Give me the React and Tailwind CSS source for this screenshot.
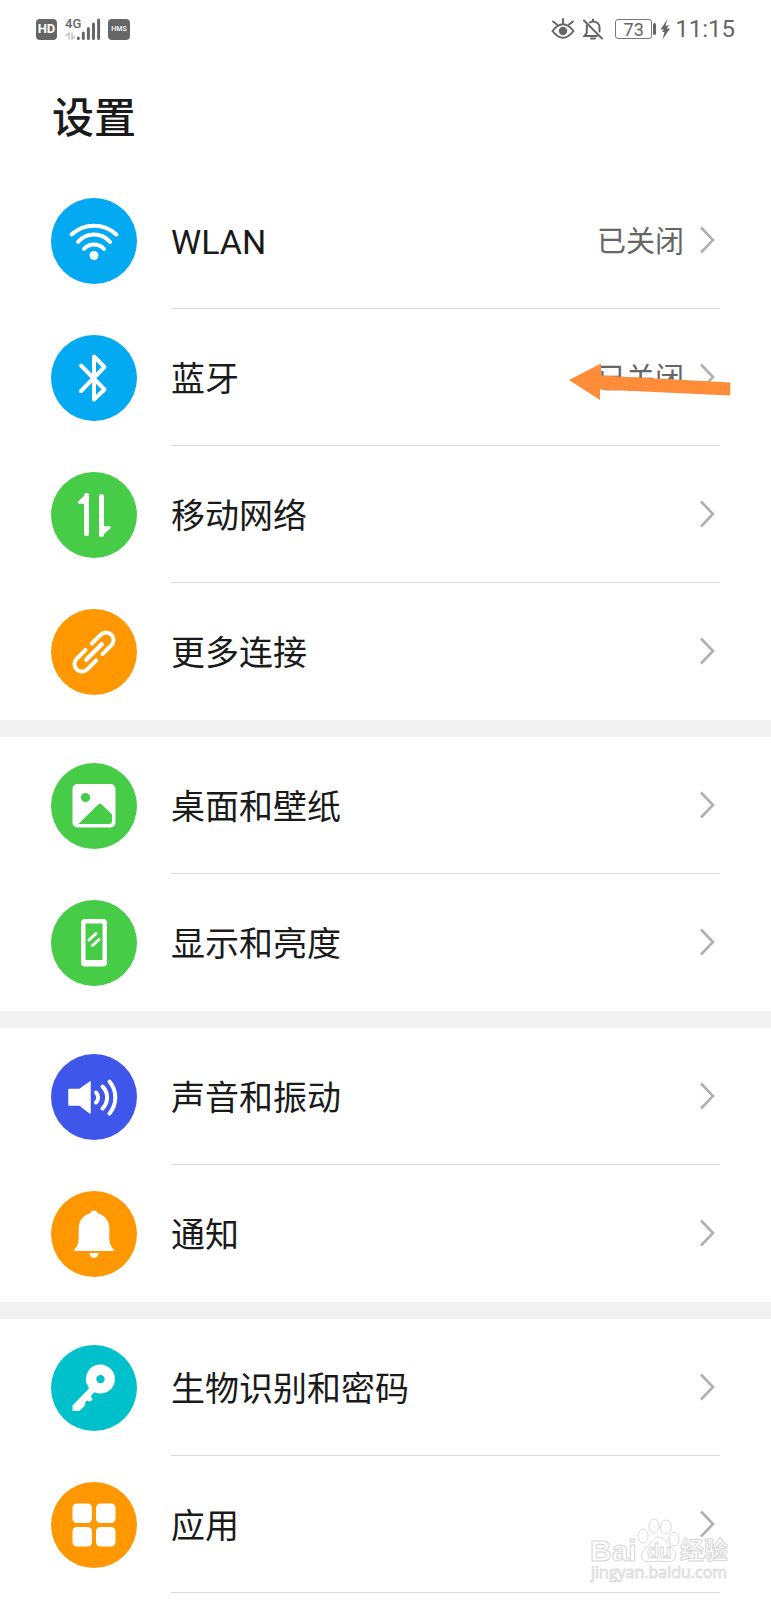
import React from 'react';

// Row icons, all drawn on the same 86x86 grid as the round badge
const WifiIcon = () => (
  <svg viewBox="0 0 86 86" className="w-full" fill="none" stroke="#fff" strokeWidth="4" strokeLinecap="round">
    <path d="M20.500 36.500A33 33 0 0 1 65.500 36.500" />
    <path d="M27 44A21 21 0 0 1 59 44" />
    <path d="M33 51A13.500 13.500 0 0 1 53 51" />
    <circle cx="43" cy="57.500" r="4.500" fill="#fff" stroke="none" />
  </svg>
);

const BluetoothIcon = () => (
  <svg viewBox="0 0 86 86" className="w-full" fill="none" stroke="#fff" strokeWidth="4" strokeLinecap="round" strokeLinejoin="round">
    <path d="M30 30.500 53.500 54.500 43 64.500V21.500L53.500 32 30 56" />
  </svg>
);

const MobileDataIcon = () => (
  <svg viewBox="0 0 86 86" className="w-full" fill="#fff" stroke="#fff" strokeLinecap="round" strokeLinejoin="round">
    <path d="M35.500 23.500V61.500M50.500 24.500V62.500" strokeWidth="5" />
    <path d="M36.500 22.500 28 30.500H36.500ZM49.500 63.500 58.500 55.500H49.500Z" strokeWidth="2.500" />
  </svg>
);

const LinkIcon = () => (
  <svg viewBox="0 0 86 86" className="w-full" fill="none" stroke="#fff" strokeWidth="4" strokeLinecap="round">
    <g transform="rotate(-45 43 43)">
      <path d="M47.500 35.500H60A7.500 7.500 0 0 1 67.500 43A7.500 7.500 0 0 1 60 50.500H47.500" />
      <path d="M38.500 50.500H26A7.500 7.500 0 0 1 18.500 43A7.500 7.500 0 0 1 26 35.500H38.500" />
      <path d="M32 43H54" strokeWidth="4.500" />
    </g>
  </svg>
);

const WallpaperIcon = () => (
  <svg viewBox="0 0 86 86" className="w-full" fill="#fff">
    <rect x="21.500" y="21" width="43" height="43.500" rx="5" />
    <g fill="#47cc47">
      <circle cx="34.500" cy="34.500" r="4.600" />
      <path d="M27.500 61 47.500 41.300Q49 40 50.500 41.300L61 51.500V58Q61 61 58 61Z" />
    </g>
  </svg>
);

const DisplayIcon = () => (
  <svg viewBox="0 0 86 86" className="w-full" fill="#fff">
    <path fillRule="evenodd" d="M34 19H52a4 4 0 0 1 4 4V62.500a4 4 0 0 1-4 4H34a4 4 0 0 1-4-4V23a4 4 0 0 1 4-4ZM34.500 23.500V60H51.500V23.500Z" />
    <path d="M38 40 45 33.500M41.500 45.500 48 39.500" stroke="#fff" strokeWidth="3" strokeLinecap="round" />
  </svg>
);

const SoundIcon = () => (
  <svg viewBox="0 0 86 86" className="w-full" fill="none" stroke="#fff" strokeWidth="4" strokeLinecap="round">
    <path d="M18 35.500H28.500L39 28V59L28.500 51H18Z" fill="#fff" strokeWidth="1.500" strokeLinejoin="round" />
    <path d="M45 38.500A7 7 0 0 1 45 48.500" />
    <path d="M51.500 32.500A15.500 15.500 0 0 1 51.500 54.500" />
    <path d="M58.500 27.500A25 25 0 0 1 58.500 59.500" />
  </svg>
);

const BellIcon = () => (
  <svg viewBox="0 0 86 86" className="w-full" fill="#fff">
    <path d="M43 19.500C45 19.500 46 20.500 46.500 22.300 53.500 24 58.300 29.500 58.300 37V47C58.300 53 60.500 56 63 59Q63.500 60 62.500 60H23.500Q22.500 60 23 59C25.500 56 27.700 53 27.700 47V37C27.700 29.500 32.500 24 39.500 22.300 40 20.500 41 19.500 43 19.500Z" />
    <path d="M38.500 62H47.500C47.500 65 45.500 66.700 43 66.700S38.500 65 38.500 62Z" />
  </svg>
);

const KeyIcon = () => (
  <svg viewBox="0 0 86 86" className="w-full" fill="#fff">
    <path fillRule="evenodd" d="M49.500 19.500A14.500 14.500 0 1 1 43.500 47.200L40.500 50 40 52Q42.500 54 40.500 55.500 39 57.500 36.500 55.500L34 57.500Q35 60 33 61.500L28.500 65.800H21.500V60.500L38 43.500 37 41.500A14.500 14.500 0 0 1 49.500 19.500ZM49.500 29.900A4.200 4.200 0 1 0 49.500 38.300 4.200 4.200 0 0 0 49.500 29.900Z" />
  </svg>
);

const AppsIcon = () => (
  <svg viewBox="0 0 86 86" className="w-full" fill="#fff">
    <rect x="21.500" y="21.500" width="19.500" height="19.500" rx="4.500" />
    <rect x="45" y="21.500" width="19.500" height="19.500" rx="4.500" />
    <rect x="21.500" y="45" width="19.500" height="19.500" rx="4.500" />
    <rect x="45" y="45" width="19.500" height="19.500" rx="4.500" />
  </svg>
);

const Chevron = () => (
  <svg viewBox="0 0 16 28" className="w-4 h-7" fill="none" stroke="#b0b0b0" strokeWidth="2.600">
    <path d="M1 1.500 13 14 1 26.500" />
  </svg>
);

const Arrow = () => (
  <svg viewBox="0 0 162 38" className="absolute right-10 top-[54px] w-[162px] h-[38px] pointer-events-none" fill="#ff8c39">
    <path d="M0 17 32 0.500V12.500L161.500 19.500 161 32.500 31 26.500V37Z" />
  </svg>
);

const Watermark = () => (
  <svg viewBox="0 0 142 70" className="absolute right-10 top-[58px] w-[142px] pointer-events-none">
    <g fill="#fff" fillOpacity="0.8" stroke="#d9d9d9" strokeWidth="1">
      <ellipse cx="54" cy="22" rx="5" ry="7" />
      <ellipse cx="65" cy="12" rx="5" ry="7" />
      <ellipse cx="77" cy="13" rx="5.500" ry="7" />
      <ellipse cx="85" cy="25" rx="5" ry="7" />
      <path d="M69 23C74 23 77 27 81 32 86 37 88 40 86 44 84 49 78 48 70 47 62 48 55 49 53 44 51 39 56 35 60 31 63 27 65 23 69 23Z" />
    </g>
    <g fill="#fff" stroke="#d6d6d6" strokeWidth="1" fontWeight="700">
      <text x="1" y="47" fontSize="30" fontFamily="Liberation Sans, sans-serif">Bai</text>
      <text x="58" y="44" fontSize="20" fontFamily="Liberation Sans, sans-serif">du</text>
      <text x="91" y="45" fontSize="24" fontFamily="Noto Sans CJK SC, sans-serif">经验</text>
    </g>
    <text x="2" y="64" fontSize="16" fill="#fff" stroke="#dedede" strokeWidth="1" fontFamily="Open Sans, sans-serif">jingyan.baidu.com</text>
  </svg>
);

const groups = [
  [
    { label: 'WLAN', value: '已关闭', color: 'bg-[#03a9f1]', Icon: WifiIcon },
    { label: '蓝牙', value: '已关闭', color: 'bg-[#03a9f1]', Icon: BluetoothIcon, Overlay: Arrow },
    { label: '移动网络', color: 'bg-[#47cc47]', Icon: MobileDataIcon },
    { label: '更多连接', color: 'bg-[#ff9800]', Icon: LinkIcon },
  ],
  [
    { label: '桌面和壁纸', color: 'bg-[#47cc47]', Icon: WallpaperIcon },
    { label: '显示和亮度', color: 'bg-[#47cc47]', Icon: DisplayIcon },
  ],
  [
    { label: '声音和振动', color: 'bg-[#3f56ea]', Icon: SoundIcon },
    { label: '通知', color: 'bg-[#ff9800]', Icon: BellIcon },
  ],
  [
    { label: '生物识别和密码', color: 'bg-[#00c1cb]', Icon: KeyIcon },
    { label: '应用', color: 'bg-[#ff9800]', Icon: AppsIcon, Overlay: Watermark, divider: true },
  ],
];

const StatusBar = () => (
  <div className="flex items-center justify-between h-[58px] px-9 text-[#666]">
    <div className="flex items-center">
      <span className="flex items-center justify-center w-[21px] h-[21px] rounded-sm bg-[#666] text-white text-[13px] font-bold">HD</span>
      <div className="relative ml-2 w-9 h-[22px]">
        <span className="absolute left-0 top-0 text-[13px] leading-[12px] font-medium">4G</span>
        <svg viewBox="0 0 36 22" className="w-9 h-[22px]" fill="none" stroke="#666" strokeWidth="3" strokeLinecap="round">
          <path d="M13.300 20V20.500M18.300 15V20.500M23.400 10.500V20.500M28.500 6V20.500M33.600 2V20.500" />
          <path d="M1 17.500 4 15V21M7 15V21L9.500 18.500" stroke="#c4c4c4" strokeWidth="1.500" />
        </svg>
      </div>
      <span className="flex items-center justify-center ml-[7px] w-[22px] h-[21px] rounded-sm bg-[#666] text-white text-[7px] font-medium">HMS</span>
    </div>

    <div className="flex items-center">
      <svg viewBox="0 0 24 22" className="w-6 h-[22px]" fill="none" stroke="#666" strokeWidth="2" strokeLinecap="round">
        <path d="M1.500 13Q12 -0.500 22.500 13 12 26.500 1.500 13Z" />
        <path d="M12 5V1M6 6.500 2 3.500M18 6.500 22 3.500" />
        <circle cx="12" cy="13" r="4.200" fill="#666" stroke="none" />
      </svg>
      <svg viewBox="0 0 20 22" className="ml-2 w-5 h-[22px]" fill="none" stroke="#666" strokeWidth="2" strokeLinecap="round">
        <path d="M1 2.500 19 20.500" />
        <path d="M7 4.500C10 2.500 16.500 4 16.500 9.500V13.500M3.800 7.500V15L1.500 18H14M10 3V1.500" />
        <path d="M8 20.500H12" />
      </svg>
      <span className="flex items-center justify-center ml-3 w-[37px] h-5 rounded-[3px] border border-[#777] text-[18px]">73</span>
      <span className="ml-px w-[3px] h-3 rounded-sm bg-[#666]"></span>
      <svg viewBox="0 0 10 22" className="ml-1 mr-[5px] w-[10px] h-[22px]" fill="#666">
        <path d="M7.500 1 0.500 11.500H4L2 14H4.500L2.500 21.500 10 10.500H6.500L9 7.500H5.500Z" />
      </svg>
      <span className="text-[24px] leading-7">11:15</span>
    </div>
  </div>
);

const Row = ({ item, divider }) => {
  const { label, value, color, Icon, Overlay } = item;
  return (
    <li className="relative">
      <button type="button" className="flex items-center w-full h-[137px] px-[51px] text-left">
        <span className={`w-[86px] h-[86px] shrink-0 rounded-full ${color}`}>
          <Icon />
        </span>
        <span className={`flex items-center flex-1 h-full ml-[34px] pr-1 border-b ${divider ? 'border-[#d9d9d9]' : 'border-transparent'}`}>
          <span className="flex-1 pt-1 text-[34px] text-[#1a1a1a]">{label}</span>
          {value && <span className="mr-4 pt-[6px] text-[29px] text-[#666]">{value}</span>}
          <Chevron />
        </span>
      </button>
      {Overlay && <Overlay />}
    </li>
  );
};

const App = () => {
  return (
    <div className="min-h-screen bg-white font-['Roboto','Noto_Sans_CJK_SC',sans-serif]">
      <StatusBar />
      <h1 className="h-[114px] pl-[52px] text-[42px] leading-[122px] font-medium text-[#1a1a1a]">设置</h1>
      <main className="flex flex-col gap-[17px] bg-[#f2f2f2]">
        {groups.map((group, i) => (
          <ul key={i} className="bg-white">
            {group.map((item, j) => (
              <Row key={item.label} item={item} divider={item.divider || j < group.length - 1} />
            ))}
          </ul>
        ))}
      </main>
    </div>
  );
};

export default App;
